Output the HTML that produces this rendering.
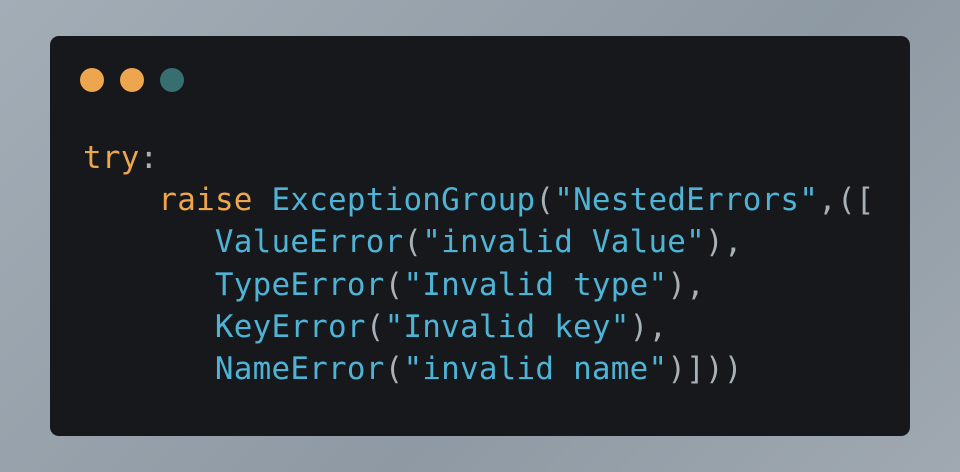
<!DOCTYPE html>
<html><head><style>
html,body{margin:0;padding:0}
body{width:960px;height:472px;background:linear-gradient(135deg,#a3adb6,#8e99a3 60%,#a0a9b1);position:relative;overflow:hidden}
.win{position:absolute;left:50px;top:36px;width:860px;height:400px;background:#16181b;border-radius:9px}
.d{position:absolute;top:32px;width:24px;height:24px;border-radius:50%}
pre{position:absolute;left:33px;top:101px;margin:0;font-family:"DejaVu Sans Mono","Liberation Mono",monospace;font-size:30.9px;letter-spacing:0.25px;line-height:42.2px;color:#4fb3d6}
.o{color:#eea64e}.p{color:#a9b1b8}
</style></head><body>
<div class="win">
<div class="d" style="left:30px;background:#eea64e"></div>
<div class="d" style="left:70px;background:#eea64e"></div>
<div class="d" style="left:110px;background:#376f70"></div>
<pre><span class="o">try</span><span class="p">:</span>
    <span class="o">raise</span> ExceptionGroup<span class="p">(</span>"NestedErrors"<span class="p">,([</span>
       ValueError<span class="p">(</span>"invalid Value"<span class="p">),</span>
       TypeError<span class="p">(</span>"Invalid type"<span class="p">),</span>
       KeyError<span class="p">(</span>"Invalid key"<span class="p">),</span>
       NameError<span class="p">(</span>"invalid name"<span class="p">)]))</span></pre>
</div>
</body></html>
